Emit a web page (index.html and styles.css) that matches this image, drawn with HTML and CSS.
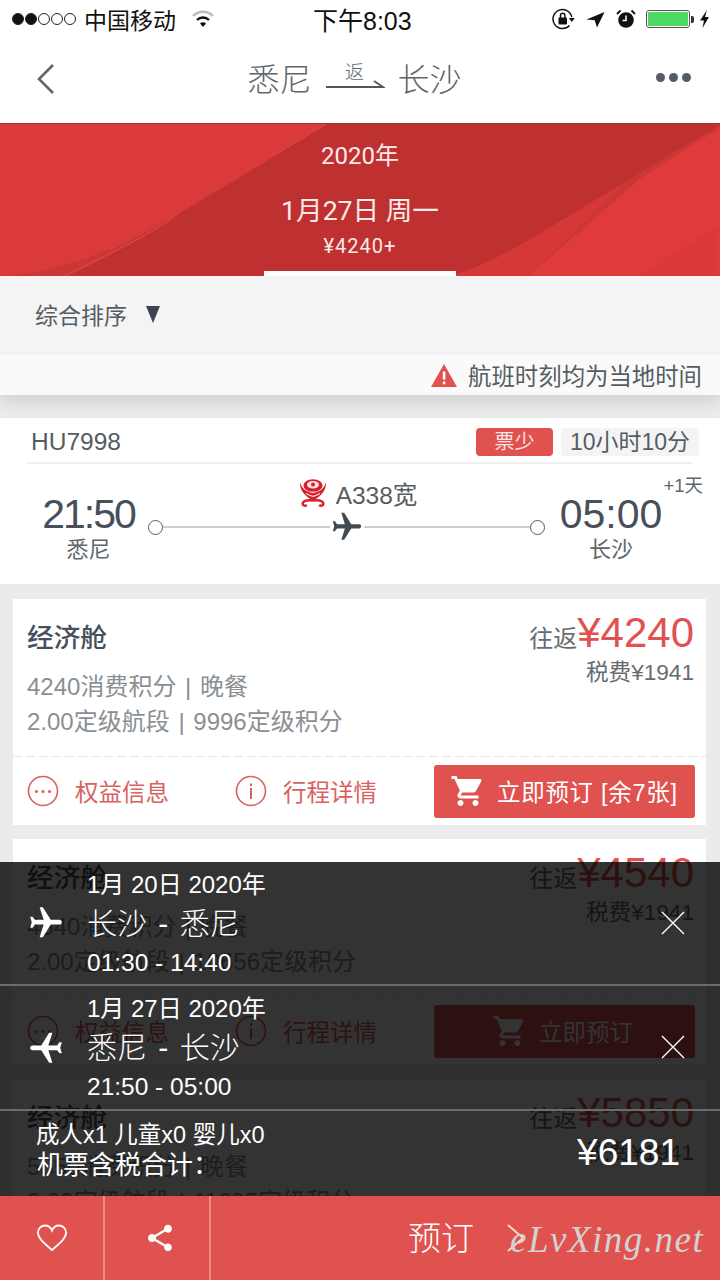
FILE: index.html
```html
<!DOCTYPE html>
<html lang="zh-CN">
<head>
<meta charset="utf-8">
<title>航班</title>
<link rel="stylesheet" href="styles.css">
</head>
<body>
<div class="app">
  <div class="status">
    <div class="status-left">
      <span class="signal"><i class="on"></i><i class="on"></i><i></i><i></i><i></i></span>
      <span class="carrier">中国移动</span>
      <svg class="wifi" width="24" height="20" viewBox="0 0 24 20"><path d="M2 7a14 14 0 0 1 20 0" fill="none" stroke="#bbb" stroke-width="2.4"/><path d="M6 11a8.500 8.500 0 0 1 12 0" fill="none" stroke="#111" stroke-width="2.4"/><path d="M9 14.500a4.500 4.500 0 0 1 6 0L12 18z" fill="#111"/></svg>
    </div>
    <div class="clock">下午8:03</div>
    <div class="status-right">
      <svg width="23" height="22" viewBox="0 0 23 22"><path d="M17.500 17.500A9.500 9.500 0 1 1 19.800 9" fill="none" stroke="#111" stroke-width="1.500"/><path d="M16.800 10h6L19.800 14z" fill="#111"/><rect x="6.500" y="9.500" width="8.500" height="7" rx="1" fill="#111"/><path d="M8.500 10V7.500a2.200 2.200 0 0 1 4.400 0V10" fill="none" stroke="#111" stroke-width="1.500"/></svg>
      <svg class="loc" width="19" height="17" viewBox="0 0 19 17"><path d="M18.500 1L.5 8.500l8.200 .8L11 16.500z" fill="#111"/></svg>
      <svg class="alarm" width="20" height="20" viewBox="0 0 20 20"><circle cx="10" cy="11" r="7.800" fill="#111"/><path d="M10 6.500v5H6.500" fill="none" stroke="#fff" stroke-width="1.500"/><path d="M1 5L4.500 1.500M19 5L15.500 1.500" stroke="#111" stroke-width="1.800"/></svg>
      <span class="battery"><span class="battery-fill"></span></span>
      <span class="battery-nub"></span>
      <svg class="bolt" width="11" height="20" viewBox="0 0 11 20"><path d="M8 1L1 11.500h4L3.500 19 10 8H6z" fill="#111"/></svg>
    </div>
  </div>

  <nav class="nav">
    <svg class="back" width="22" height="34" viewBox="0 0 22 34"><path d="M18 3L4 17l14 14" fill="none" stroke="#666" stroke-width="2.600"/></svg>
    <div class="route">
      <span>悉尼</span>
      <span class="return"><span class="return-label">返</span><svg width="60" height="10" viewBox="0 0 60 10"><path d="M1 9h57L49 3" fill="none" stroke="#555" stroke-width="1.800"/></svg></span>
      <span>长沙</span>
    </div>
    <div class="more"><i></i><i></i><i></i></div>
  </nav>

  <header class="banner">
    <svg class="banner-art" width="720" height="153" viewBox="0 0 720 153">
      <rect width="720" height="153" fill="#da3b3a"/>
      <path d="M327 0C253 43 177 90 110 125C75 140 35 150 0 153H720V5Z" fill="#cb3636"/>
      <path d="M327 0C250 48 150 110 63 153H437C470 150 500 132 527 117C560 100 600 75 627 57C660 35 690 18 720 2V0Z" fill="#bf3030"/>
      <path d="M527 153C560 125 600 90 637 57C665 38 695 18 720 5V153Z" fill="#e03a3a"/>
      <path d="M437 153C470 150 500 132 527 117L627 57L527 153Z" fill="#d63838"/>
      <path d="M637 153L717 103V153Z" fill="#d63838" opacity=".5"/>
      <path d="M63 153C120 125 160 105 177 90" fill="none" stroke="#e2433f" stroke-width="1.500"/>
      <path d="M110 125C150 108 215 65 327 0" fill="none" stroke="#e2433f" stroke-width="1"/>
    </svg>
    <div class="banner-year">2020年</div>
    <div class="banner-date">1月27日 周一</div>
    <div class="banner-price">¥4240+</div>
    <div class="tab-mark"></div>
  </header>

  <div class="sort"><span>综合排序</span><span class="sort-arrow"></span></div>

  <div class="notice">
    <svg width="28" height="24" viewBox="0 0 28 24"><path d="M14 1L27 24H1z" fill="#e0524f"/><rect x="12.800" y="8.500" width="2.600" height="8" fill="#fff"/><rect x="12.800" y="18.500" width="2.600" height="2.800" fill="#fff"/></svg>
    <span>航班时刻均为当地时间</span>
  </div>

  <section class="flight">
    <div class="flight-head">
      <span class="flight-no">HU7998</span>
      <span class="flight-tags"><span class="tag-red">票少</span><span class="tag-gray">10小时10分</span></span>
    </div>
    <div class="flight-body">
      <div class="endpoint">
        <div class="time time-tight">21:50</div>
        <div class="city">悉尼</div>
      </div>
      <div class="path">
        <div class="plane-type">
          <svg width="28" height="28" viewBox="0 0 28 28"><ellipse cx="14" cy="6.500" rx="9.500" ry="6.300" fill="#d6202c"/><ellipse cx="14" cy="5.800" rx="6" ry="3.800" fill="#fbe3e4"/><circle cx="14" cy="5.500" r="2" fill="#d6202c"/><path d="M1 3C.5 11 5 16 14 22C23 16 27.500 11 27 3C25.500 10 20 13 14 14C8 13 2.500 10 1 3Z" fill="#d6202c"/><path d="M7 14.500C9.500 16 11.500 16.800 14 17.300C16.500 16.800 18.500 16 21 14.500" fill="none" stroke="#fbe3e4" stroke-width="1.200"/><path d="M14 21.500C10 21 5 21 3.800 24C3 26.500 6 27.500 7.800 26" fill="none" stroke="#d6202c" stroke-width="2.400"/><path d="M14 21.500C18 21 23 21 24.200 24C25 26.500 22 27.500 20.200 26" fill="none" stroke="#d6202c" stroke-width="2.400"/></svg>
          <span>A338宽</span>
        </div>
        <div class="track">
          <i class="dot"></i>
          <span class="track-line"></span>
          <svg width="34" height="34" viewBox="0 0 24 24"><path transform="rotate(90 12 12)" d="M21 16v-2l-8-5V3.500c0-.83-.67-1.500-1.500-1.500S10 2.670 10 3.500V9l-8 5v2l8-2.500V19l-2 1.500V22l3.500-1 3.500 1v-1.500L13 19v-5.500l8 2.500z" fill="#3f4a54"/></svg>
          <span class="track-line"></span>
          <i class="dot"></i>
        </div>
      </div>
      <div class="endpoint">
        <div class="time">05:00</div>
        <div class="city">长沙</div>
        <span class="plus-day">+1天</span>
      </div>
    </div>
  </section>

  <section class="fares">
    <article class="fare">
      <div class="fare-top">
        <div>
          <div class="fare-name">经济舱</div>
          <div class="fare-info">4240消费积分 | 晚餐</div>
          <div class="fare-info">2.00定级航段 | 9996定级积分</div>
        </div>
        <div class="fare-price">
          <div><span class="round">往返</span><span class="amount">¥4240</span></div>
          <div class="tax">税费¥1941</div>
        </div>
      </div>
      <div class="fare-actions">
        <span class="action action-a"><svg width="32" height="32" viewBox="0 0 32 32"><circle cx="16" cy="16" r="14.500" fill="none" stroke="#d9615e" stroke-width="1.600"/><circle cx="9.500" cy="16.500" r="1.600" fill="#d9615e"/><circle cx="16" cy="16.500" r="1.600" fill="#d9615e"/><circle cx="22.500" cy="16.500" r="1.600" fill="#d9615e"/></svg>权益信息</span>
        <span class="action action-b"><svg width="32" height="32" viewBox="0 0 32 32"><circle cx="16" cy="16" r="14.500" fill="none" stroke="#d9615e" stroke-width="1.600"/><rect x="15" y="13" width="2" height="11" fill="#d9615e"/><rect x="15" y="8.500" width="2" height="2.500" fill="#d9615e"/></svg>行程详情</span>
        <button class="book"><svg width="36" height="36" viewBox="0 0 24 24"><path d="M7 18c-1.100 0-1.990.9-1.990 2S5.900 22 7 22s2-.9 2-2-.9-2-2-2zM1 2v2h2l3.600 7.590-1.350 2.450c-.16.28-.25.61-.25.96 0 1.100.9 2 2 2h12v-2H7.420c-.14 0-.25-.11-.25-.25l.03-.12.9-1.630h7.450c.75 0 1.410-.41 1.750-1.030l3.580-6.490c.08-.14.12-.31.12-.48 0-.55-.45-1-1-1H5.210l-.94-2H1zm16 16c-1.100 0-1.990.9-1.990 2s.89 2 1.990 2 2-.9 2-2-.9-2-2-2z" fill="#fff"/></svg>立即预订 [余7张]</button>
      </div>
    </article>

    <article class="fare">
      <div class="fare-top">
        <div>
          <div class="fare-name">经济舱</div>
          <div class="fare-info">4540消费积分 | 晚餐</div>
          <div class="fare-info">2.00定级航段 | 10656定级积分</div>
        </div>
        <div class="fare-price">
          <div><span class="round">往返</span><span class="amount">¥4540</span></div>
          <div class="tax">税费¥1941</div>
        </div>
      </div>
      <div class="fare-actions">
        <span class="action action-a"><svg width="32" height="32" viewBox="0 0 32 32"><circle cx="16" cy="16" r="14.500" fill="none" stroke="#d9615e" stroke-width="1.600"/><circle cx="9.500" cy="16.500" r="1.600" fill="#d9615e"/><circle cx="16" cy="16.500" r="1.600" fill="#d9615e"/><circle cx="22.500" cy="16.500" r="1.600" fill="#d9615e"/></svg>权益信息</span>
        <span class="action action-b"><svg width="32" height="32" viewBox="0 0 32 32"><circle cx="16" cy="16" r="14.500" fill="none" stroke="#d9615e" stroke-width="1.600"/><rect x="15" y="13" width="2" height="11" fill="#d9615e"/><rect x="15" y="8.500" width="2" height="2.500" fill="#d9615e"/></svg>行程详情</span>
        <button class="book book-center"><svg width="36" height="36" viewBox="0 0 24 24"><path d="M7 18c-1.100 0-1.990.9-1.990 2S5.900 22 7 22s2-.9 2-2-.9-2-2-2zM1 2v2h2l3.600 7.590-1.350 2.450c-.16.28-.25.61-.25.96 0 1.100.9 2 2 2h12v-2H7.420c-.14 0-.25-.11-.25-.25l.03-.12.9-1.630h7.450c.75 0 1.410-.41 1.750-1.030l3.580-6.490c.08-.14.12-.31.12-.48 0-.55-.45-1-1-1H5.210l-.94-2H1zm16 16c-1.100 0-1.990.9-1.990 2s.89 2 1.990 2 2-.9 2-2-.9-2-2-2z" fill="#fff"/></svg>立即预订</button>
      </div>
    </article>

    <article class="fare">
      <div class="fare-top">
        <div>
          <div class="fare-name">经济舱</div>
          <div class="fare-info">5850消费积分 | 晚餐</div>
          <div class="fare-info">2.00定级航段 | 11695定级积分</div>
        </div>
        <div class="fare-price">
          <div><span class="round">往返</span><span class="amount">¥5850</span></div>
          <div class="tax">税费¥1941</div>
        </div>
      </div>
    </article>
  </section>

  <div class="bottom">
    <div class="summary">
      <div class="leg">
        <svg class="leg-plane" width="38" height="38" viewBox="0 0 24 24"><path transform="rotate(90 12 12)" d="M21 16v-2l-8-5V3.500c0-.83-.67-1.500-1.500-1.500S10 2.670 10 3.500V9l-8 5v2l8-2.500V19l-2 1.500V22l3.500-1 3.500 1v-1.500L13 19v-5.500l8 2.500z" fill="#fff"/></svg>
        <div class="leg-text">
          <div class="leg-date">1月 20日 2020年</div>
          <div class="leg-route">长沙 - 悉尼</div>
          <div class="leg-time">01:30 - 14:40</div>
        </div>
        <svg class="leg-close" width="24" height="24" viewBox="0 0 24 24"><path d="M1 1l22 22M23 1L1 23" stroke="#fff" stroke-width="1.400"/></svg>
      </div>
      <div class="leg">
        <svg class="leg-plane" width="38" height="38" viewBox="0 0 24 24"><path transform="rotate(-90 12 12)" d="M21 16v-2l-8-5V3.500c0-.83-.67-1.500-1.500-1.500S10 2.670 10 3.500V9l-8 5v2l8-2.500V19l-2 1.500V22l3.500-1 3.500 1v-1.500L13 19v-5.500l8 2.500z" fill="#fff"/></svg>
        <div class="leg-text">
          <div class="leg-date">1月 27日 2020年</div>
          <div class="leg-route">悉尼 - 长沙</div>
          <div class="leg-time">21:50 - 05:00</div>
        </div>
        <svg class="leg-close" width="24" height="24" viewBox="0 0 24 24"><path d="M1 1l22 22M23 1L1 23" stroke="#fff" stroke-width="1.400"/></svg>
      </div>
      <div class="total">
        <div>
          <div class="total-pax">成人x1 儿童x0 婴儿x0</div>
          <div class="total-label">机票含税合计：</div>
        </div>
        <div class="total-price">¥6181</div>
      </div>
    </div>
    <footer class="footer">
      <div class="foot-cell"><svg width="32" height="30" viewBox="0 0 32 30"><path d="M16 27C9 21 2 15.500 2 9.500C2 5 5.500 2.500 9 2.500C12 2.500 14.800 4.500 16 7.500C17.200 4.500 20 2.500 23 2.500C26.500 2.500 30 5 30 9.500C30 15.500 23 21 16 27Z" fill="none" stroke="#fff" stroke-width="1.800"/></svg></div>
      <div class="foot-cell foot-cell-b"><svg width="32" height="32" viewBox="0 0 24 24"><path d="M18 16.080c-.76 0-1.440.3-1.960.77L8.910 12.700c.05-.23.09-.46.09-.7s-.04-.47-.09-.7l7.050-4.110c.54.5 1.250.81 2.040.81 1.660 0 3-1.340 3-3s-1.340-3-3-3-3 1.340-3 3c0 .24.04.47.09.7L8.040 9.810C7.500 9.310 6.790 9 6 9c-1.660 0-3 1.340-3 3s1.340 3 3 3c.79 0 1.500-.31 2.040-.81l7.120 4.160c-.05.21-.08.43-.08.65 0 1.610 1.310 2.920 2.920 2.920s2.920-1.310 2.920-2.920-1.310-2.920-2.920-2.920z" fill="#fff"/></svg></div>
      <div class="foot-book">
        <span class="foot-label">预订</span>
        <svg width="18" height="30" viewBox="0 0 18 30"><path d="M1 2l15 13L1 28" fill="none" stroke="#fbdcdb" stroke-width="1.800"/></svg>
      </div>
      <span class="watermark">eLvXing.net</span>
    </footer>
  </div>
</div>
</body>
</html>
```
FILE: styles.css
```css
* { box-sizing: border-box; }
html, body { margin: 0; padding: 0; }
body { font-family: "Liberation Sans", "Noto Sans CJK SC", sans-serif; color: #444b52; background: #ebebeb; }
i { display: block; font-style: normal; }
svg { display: block; flex: none; }

.app { position: relative; width: 720px; height: 1280px; overflow: hidden; background: #ebebeb; }

.status { height: 38px; padding: 0 10px 0 12px; background: #fff; display: flex; align-items: center; color: #111; }
.status-left { display: flex; align-items: center; width: 301px; flex: none; }
.signal { display: flex; gap: 1px; }
.signal i { width: 12px; height: 12px; border-radius: 50%; border: 1px solid #222; }
.signal i.on { background: #111; }
.carrier { font-size: 23px; margin-left: 8px; }
.wifi { margin-left: 15px; }
.clock { font-size: 25px; white-space: nowrap; flex: none; width: 99px; }
.status-right { display: flex; align-items: center; flex: 1; justify-content: flex-end; }
.loc { margin-left: 11px; }
.alarm { margin-left: 11px; }
.battery { width: 44px; height: 18px; border: 1.500px solid #555; border-radius: 3px; padding: 1px; margin-left: 10px; display: block; }
.battery-fill { display: block; width: 100%; height: 100%; background: #4cd964; border-radius: 1px; }
.battery-nub { width: 3px; height: 7px; background: #333; border-radius: 0 2px 2px 0; margin-left: 1px; }
.bolt { margin-left: 5px; }

.nav { height: 85px; background: #fff; display: flex; align-items: center; justify-content: space-between; padding: 0 29px 4px 35px; }
.route { display: flex; align-items: center; gap: 13px; font-size: 32px; line-height: 40px; color: #5f666c; font-weight: 300; margin: 2px 4px 0 0; }
.return { display: flex; flex-direction: column; align-items: center; width: 60px; margin-top: -10px; }
.return-label { font-size: 19px; line-height: 22px; margin-bottom: -6px; }
.more { display: flex; gap: 4px; margin-top: -2px; }
.more i { width: 9px; height: 9px; border-radius: 50%; background: #555c62; }

.banner { position: relative; height: 153px; background: #da3b3a; border-top: 1px solid #8f3b3b; color: #fbeaea; text-align: center; font-family: Roboto, "Noto Sans CJK SC", sans-serif; overflow: hidden; }
.banner-art { position: absolute; left: 0; top: 0; }
.banner-year, .banner-date, .banner-price { position: relative; }
.banner-year { font-size: 24px; line-height: 30px; margin-top: 17px; }
.banner-date { font-size: 26.600px; line-height: 36px; margin-top: 22px; }
.banner-price { font-size: 20px; line-height: 24px; margin-top: 5px; letter-spacing: 1px; }
.tab-mark { position: absolute; left: 264px; bottom: 0; width: 192px; height: 5px; background: #fff; }

.sort { height: 79px; background: #f4f4f5; display: flex; align-items: center; gap: 19px; padding: 0 0 3px 35px; font-size: 23px; color: #555c62; }
.sort-arrow { width: 0; height: 0; border-left: 7.500px solid transparent; border-right: 7.500px solid transparent; border-top: 17px solid #3b4450; margin: 0; }

.notice { position: relative; height: 40px; background: #fafafa; display: flex; align-items: center; justify-content: flex-end; gap: 10px; padding-right: 18px; font-size: 23.400px; color: #555c62; box-shadow: 0 8px 14px rgba(0,0,0,.1); }

.flight { margin-top: 22px; height: 167px; background: #fff; border-top: 1px solid #e8e8e8; }
.flight-head { margin: 0 28px 0 27px; height: 46px; border-bottom: 2px solid #eee; display: flex; align-items: center; justify-content: space-between; padding: 2px 0 0 4px; }
.flight-no { font-size: 24.500px; color: #555c62; margin-top: 2px; }
.flight-tags { display: flex; gap: 8px; margin-right: -7px; margin-top: 2px; }
.tag-red, .tag-gray { height: 28px; border-radius: 4px; line-height: 28px; text-align: center; }
.tag-red { width: 77px; font-size: 20px; background: #e0524f; color: #fbe4e3; }
.tag-gray { width: 138px; font-size: 23px; background: #f4f4f5; color: #555c62; }

.flight-body { position: relative; display: flex; padding: 0 43px 0 27px; }
.endpoint { width: 123px; text-align: center; padding-top: 27px; flex: none; }
.endpoint:last-child { width: 132px; }
.time { font-size: 41px; line-height: 46px; color: #47505a; }
.time-tight { letter-spacing: -2px; }
.city { font-size: 22px; line-height: 26px; color: #5f666c; }
.plus-day { position: absolute; right: 17px; top: 7px; font-size: 18.500px; color: #5f666c; }
.path { width: 397px; flex: none; margin-left: -2px; padding-top: 15px; display: flex; flex-direction: column; align-items: stretch; }
.plane-type { display: flex; align-items: center; justify-content: center; gap: 9px; height: 28px; font-size: 24.500px; color: #555c62; padding-left: 23px; }
.track { display: flex; align-items: center; height: 28px; margin-top: 6px; }
.dot { width: 15px; height: 15px; border-radius: 50%; border: 1.500px solid #555c62; background: #fff; flex: none; }
.track-line { flex: 1; height: 2px; background: #ccc; }

.fares { padding: 15px 14px 0 13px; display: flex; flex-direction: column; gap: 14px; }
.fare { height: 226px; background: #fff; flex: none; }
.fare-top { height: 158px; background: repeating-linear-gradient(90deg, #e6e6e6 0 9px, transparent 9px 13px) left bottom / 100% 1px no-repeat; display: flex; justify-content: space-between; padding: 17px 12px 0 14px; }
.fare-name { font-size: 26.700px; line-height: 44px; font-weight: 500; color: #47505a; }
.fare-info { font-size: 24px; line-height: 35px; color: #8a8f94; word-spacing: 2px; }
.fare-info:nth-child(2) { margin-top: 9px; }
.fare-price { text-align: right; margin-top: -3px; }
.round { font-size: 24px; color: #666c72; }
.amount { font-size: 42px; line-height: 40px; color: #e0524f; }
.tax { font-size: 22.600px; line-height: 34px; color: #666c72; margin-top: 2px; }
.fare-actions { height: 68px; display: flex; align-items: center; padding: 0 11px 0 14px; font-size: 23.500px; color: #d9615e; }
.action { display: flex; align-items: center; gap: 16px; }
.action-a { width: 208px; }
.action-b { width: 199px; }
.book { margin-left: auto; width: 261px; height: 53px; border: 0; border-radius: 3px; background: #e0524f; color: #fff; display: flex; align-items: center; gap: 11px; padding: 0 0 0 16px; font: inherit; font-size: 23.500px; letter-spacing: .7px; }
.book-center { padding-left: 58px; letter-spacing: 0; }

.bottom { position: absolute; left: 0; right: 0; bottom: 0; }
.summary { background: rgba(0,0,0,.8); color: #fff; }
.leg { height: 124px; border-bottom: 2px solid #6c6c6c; display: flex; align-items: flex-start; padding: 0 35px 0 27px; }
.leg + .leg { height: 125px; }
.leg-plane { margin: 42px 22px 0 0; }
.leg-text { flex: 1; padding-top: 8px; }
.leg-date { font-size: 24px; line-height: 30px; }
.leg-route { font-size: 30px; line-height: 48px; font-weight: 300; word-spacing: 3px; }
.leg-time { font-size: 24.500px; line-height: 30px; }
.leg-close { margin-top: 49px; }
.total { height: 85px; display: flex; align-items: center; justify-content: space-between; padding: 0 40px 6px 37px; }
.total-pax { font-size: 23.500px; line-height: 28px; margin-left: -1px; }
.total-label { font-size: 26px; line-height: 32px; }
.total-price { font-size: 37px; margin-top: 4px; }
.footer { position: relative; height: 84px; background: #e0524f; display: flex; color: #fff; }
.foot-cell { width: 105px; display: flex; align-items: center; justify-content: center; border-right: 2px solid #ee8b88; padding-bottom: 1px; }
.foot-cell-b { width: 106px; padding-left: 6px; }
.foot-book { flex: 1; display: flex; align-items: center; justify-content: flex-end; gap: 33px; padding: 0 195px 0 0; font-size: 33px; font-weight: 300; }
.foot-label { margin-top: -4px; }
.watermark { position: absolute; left: 510px; top: 22px; font-family: "Liberation Serif", serif; font-style: italic; font-size: 37px; line-height: 44px; color: #d2d2d2; letter-spacing: 1.500px; }
```
